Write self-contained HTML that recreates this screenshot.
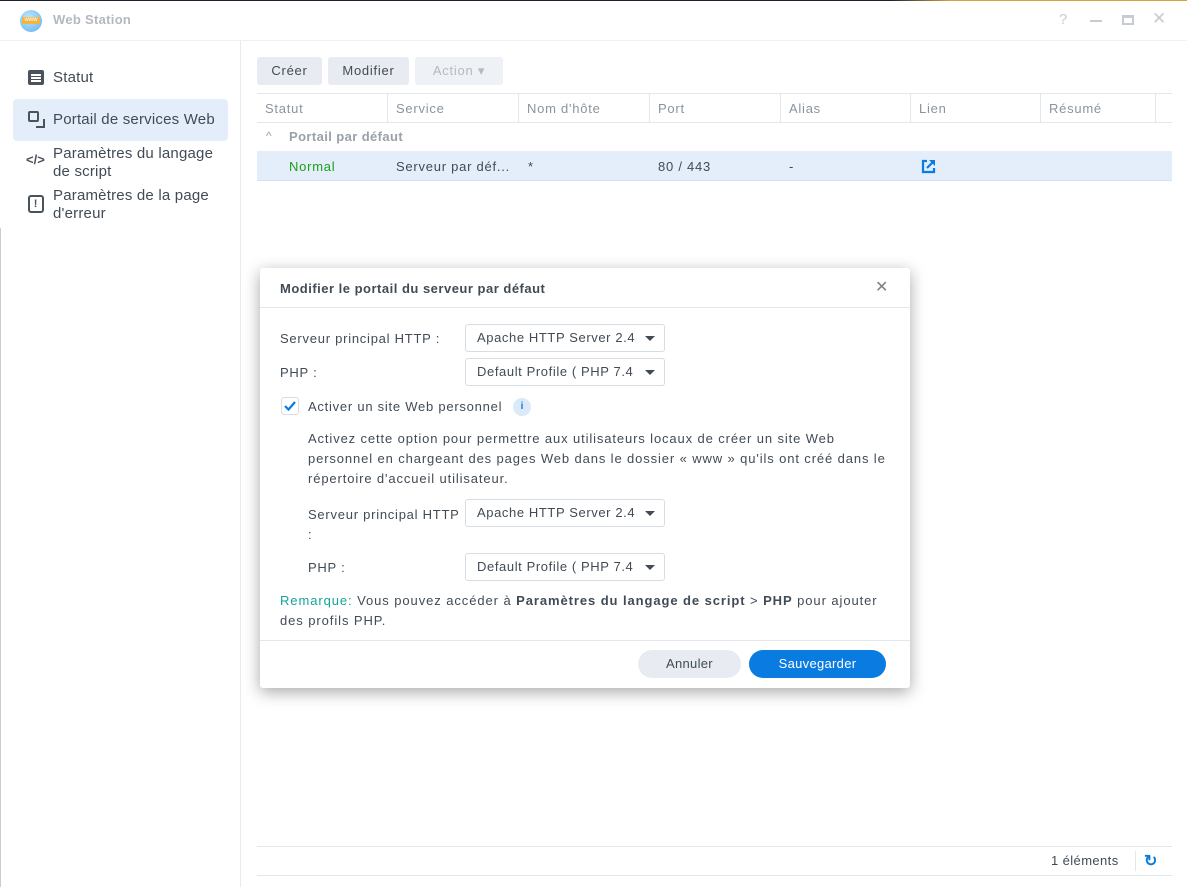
<!DOCTYPE html>
<html><head><meta charset="utf-8"><style>
*{box-sizing:border-box;margin:0;padding:0}
body{width:1187px;height:887px;overflow:hidden;background:#fff;font-family:"Liberation Sans",sans-serif;font-size:13px;color:#414b55;position:relative;letter-spacing:0.75px}
.a{position:absolute;white-space:nowrap}
.btn{position:absolute;background:#e8ecf2;border-radius:3px;height:28px;line-height:28px;text-align:center;font-size:13px;color:#414b55}
.th{position:absolute;top:94px;height:29px;line-height:29px;color:#8a949e;padding-left:8px;border-right:1px solid #e3e7ec}
.sel{position:absolute;left:205px;width:200px;height:28px;border:1px solid #d8dde3;border-radius:3px;line-height:26px;padding-left:11px;color:#414b55;letter-spacing:0.6px}
.sel:after{content:"";position:absolute;right:9px;top:11px;border-left:5px solid transparent;border-right:5px solid transparent;border-top:5px solid #414b55}
.sb{letter-spacing:0.2px}
</style></head><body>
<div class="a" style="left:0;top:0;width:1187px;height:1px;background:linear-gradient(90deg,#1a2230 0,#1a2230 75%,#d8a040 80%,#d8a040 100%)"></div>
<div class="a" style="left:20px;top:10px;width:22px;height:22px;border-radius:50%;background:radial-gradient(circle at 40% 35%,#bfe6ff,#5fb0ec)"></div>
<div class="a" style="left:22px;top:17px;width:18px;height:7px;background:#f0b640;font-size:6px;color:#fff;line-height:7px;text-align:center;letter-spacing:0">www</div>
<div class="a" style="left:53px;top:12px;font-weight:bold;font-size:13px;color:#b4b9bf;letter-spacing:0.3px">Web Station</div>
<div class="a" style="left:1059px;top:11px;color:#c8ccd0;font-size:15px">?</div>
<div class="a" style="left:1090px;top:20px;width:12px;height:2px;background:#c8ccd0"></div>
<div class="a" style="left:1122px;top:15px;width:12px;height:10px;border:2px solid #c8ccd0;border-top-width:3px"></div>
<div class="a" style="left:1152px;top:9px;color:#c8ccd0;font-size:17px">✕</div>
<div class="a" style="left:0;top:40px;width:1187px;height:1px;background:#eef0f3"></div>
<div class="a" style="left:240px;top:41px;width:1px;height:846px;background:#e8ebef"></div>
<div class="a" style="left:0;top:228px;width:1px;height:659px;background:#ccc"></div>
<div class="a" style="left:28px;top:70px;width:16px;height:15px;background:#4a525b;border-radius:2px"></div>
<div class="a" style="left:31px;top:74px;width:10px;height:1.5px;background:#fff;box-shadow:0 3px 0 #fff,0 6px 0 #fff"></div>
<div class="a sb" style="left:53px;top:69px;font-size:15px;color:#414b55">Statut</div>
<div class="a" style="left:13px;top:99px;width:215px;height:42px;background:#e3eefa;border-radius:4px"></div>
<div class="a" style="left:28px;top:111px;width:11px;height:11px;border:2px solid #4a525b;border-radius:2px"></div>
<div class="a" style="left:36px;top:119px;width:9px;height:9px;border-right:2px solid #4a525b;border-bottom:2px solid #4a525b"></div>
<div class="a sb" style="left:53px;top:111px;font-size:15px">Portail de services Web</div>
<div class="a" style="left:26px;top:152px;font-size:13px;font-weight:bold;color:#4a525b;letter-spacing:0">&lt;/&gt;</div>
<div class="a sb" style="left:53px;top:145px;font-size:15px;line-height:18px">Paramètres du langage<br>de script</div>
<div class="a" style="left:28px;top:195px;width:16px;height:18px;border:2px solid #4a525b;border-radius:3px;text-align:center;font-weight:bold;font-size:11px;line-height:14px;color:#4a525b">!</div>
<div class="a sb" style="left:53px;top:187px;font-size:15px;line-height:18px">Paramètres de la page<br>d'erreur</div>
<div class="btn" style="left:257px;top:57px;width:65px">Créer</div>
<div class="btn" style="left:328px;top:57px;width:81px">Modifier</div>
<div class="btn" style="left:415px;top:57px;width:88px;color:#b4bac1;background:#eef1f5">Action ▾</div>
<div class="a" style="left:257px;top:93px;width:915px;height:1px;background:#e3e7ec"></div>
<div class="a" style="left:257px;top:122px;width:915px;height:1px;background:#e3e7ec"></div>
<div class="th" style="left:257px;width:131px">Statut</div>
<div class="th" style="left:388px;width:131px">Service</div>
<div class="th" style="left:519px;width:131px">Nom d'hôte</div>
<div class="th" style="left:650px;width:131px">Port</div>
<div class="th" style="left:781px;width:130px">Alias</div>
<div class="th" style="left:911px;width:130px">Lien</div>
<div class="th" style="left:1041px;width:115px">Résumé</div>
<div class="a" style="left:266px;top:129px;color:#9aa1a9;font-size:12px">^</div>
<div class="a" style="left:289px;top:129px;color:#9aa1a9;font-weight:bold;letter-spacing:0.4px">Portail par défaut</div>
<div class="a" style="left:257px;top:151px;width:915px;height:30px;background:#e3eefa;border-bottom:1px solid #d4e2f2"></div>
<div class="a" style="left:289px;top:159px;color:#1aa01a">Normal</div>
<div class="a" style="left:396px;top:159px">Serveur par déf...</div>
<div class="a" style="left:528px;top:159px">*</div>
<div class="a" style="left:658px;top:159px">80 / 443</div>
<div class="a" style="left:789px;top:159px">-</div>
<svg class="a" style="left:921px;top:159px" width="15" height="15" viewBox="0 0 15 15"><path d="M6 2H2v11h11V9" fill="none" stroke="#0a7be0" stroke-width="2.2"/><path d="M8 1h6v6z" fill="#0a7be0"/><path d="M6 9l6-6" stroke="#0a7be0" stroke-width="2.2"/></svg>
<div class="a" style="left:257px;top:846px;width:915px;height:1px;background:#e3e7ec"></div>
<div class="a" style="left:257px;top:875px;width:915px;height:1px;background:#e3e7ec"></div>
<div class="a" style="left:1051px;top:853px;letter-spacing:0.4px">1 éléments</div>
<div class="a" style="left:1135px;top:851px;width:1px;height:20px;background:#e3e7ec"></div>
<div class="a" style="left:1144px;top:851px;color:#0a7be0;font-size:16px;font-weight:bold">↻</div>
<div class="a" style="left:260px;top:268px;width:650px;height:420px;background:#fff;border-radius:3px;box-shadow:0 4px 16px rgba(0,0,0,.35)">
<div class="a" style="left:20px;top:13px;font-weight:bold;color:#414b55;letter-spacing:0.5px">Modifier le portail du serveur par défaut</div>
<div class="a" style="left:615px;top:9px;font-size:16px;color:#7a828a">✕</div>
<div class="a" style="left:0;top:39px;width:650px;height:1px;background:#e3e7ec"></div>
<div class="a" style="left:20px;top:63px">Serveur principal HTTP :</div>
<div class="sel" style="top:56px">Apache HTTP Server 2.4</div>
<div class="a" style="left:20px;top:97px">PHP :</div>
<div class="sel" style="top:90px">Default Profile ( PHP 7.4</div>
<div class="a" style="left:21px;top:129px;width:18px;height:18px;border:1px solid #d8dde3;border-radius:3px"></div>
<svg class="a" style="left:23px;top:131px" width="14" height="14"><path d="M2 7l3.5 3.5L12 3" fill="none" stroke="#0a7be0" stroke-width="2.2"/></svg>
<div class="a" style="left:48px;top:131px">Activer un site Web personnel</div>
<div class="a" style="left:253px;top:130px;width:18px;height:18px;border-radius:50%;background:#dceaf8;color:#0a7be0;font-size:10px;font-weight:bold;text-align:center;line-height:18px;letter-spacing:0">i</div>
<div class="a" style="left:48px;top:161px;line-height:20px;letter-spacing:0.88px">Activez cette option pour permettre aux utilisateurs locaux de créer un site Web<br>personnel en chargeant des pages Web dans le dossier « www » qu'ils ont créé dans le<br>répertoire d'accueil utilisateur.</div>
<div class="a" style="left:48px;top:237px;line-height:20px">Serveur principal HTTP<br>:</div>
<div class="sel" style="top:231px">Apache HTTP Server 2.4</div>
<div class="a" style="left:48px;top:292px">PHP :</div>
<div class="sel" style="top:285px">Default Profile ( PHP 7.4</div>
<div class="a" style="left:20px;top:323px;line-height:20px;letter-spacing:0.92px"><span style="color:#12a59a">Remarque:</span> Vous pouvez accéder à <b>Paramètres du langage de script</b> &gt; <b>PHP</b> pour ajouter<br>des profils PHP.</div>
<div class="a" style="left:0;top:372px;width:650px;height:1px;background:#e3e7ec"></div>
<div class="a" style="left:378px;top:382px;width:103px;height:28px;border-radius:14px;background:#e8ecf2;text-align:center;line-height:28px;letter-spacing:0.3px">Annuler</div>
<div class="a" style="left:489px;top:382px;width:137px;height:28px;border-radius:14px;background:#0a7be0;color:#fff;text-align:center;line-height:28px;letter-spacing:0.3px">Sauvegarder</div>
</div>
</body></html>
